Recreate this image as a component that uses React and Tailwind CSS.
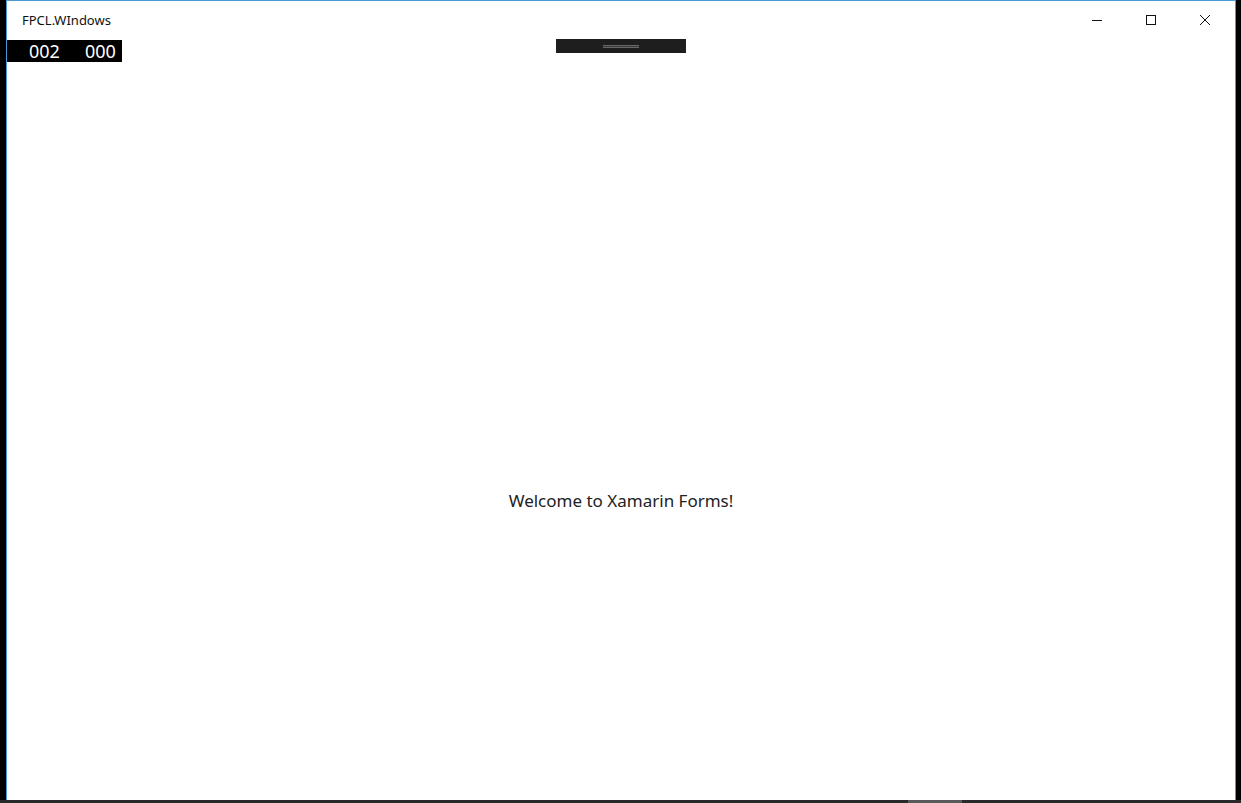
import React from 'react';

const font = { fontFamily: '"Noto Sans", "Open Sans", sans-serif' };

const WindowControls = () => (
  <div className="flex h-[37px] items-center">
    <button className="flex h-[37px] w-[54px] items-center justify-center">
      <svg width="12" height="12" viewBox="0 0 12 12">
        <path d="M1 6.5h10" stroke="#111" strokeWidth="1" />
      </svg>
    </button>
    <button className="flex h-[37px] w-[54px] items-center justify-center">
      <svg width="12" height="12" viewBox="0 0 12 12">
        <rect x="1.5" y="1.5" width="9" height="9" fill="none" stroke="#111" strokeWidth="1" />
      </svg>
    </button>
    <button className="flex h-[37px] w-[54px] items-center justify-center">
      <svg width="12" height="12" viewBox="0 0 12 12">
        <path d="M1 1l10 10M11 1L1 11" stroke="#111" strokeWidth="1" />
      </svg>
    </button>
  </div>
);

export default function App() {
  return (
    <div className="flex h-[803px] w-[1241px] flex-col bg-black" style={font}>
      <div className="flex h-[800px] w-[1230px] ml-[6px] flex-col border-l border-r border-t border-[#4a9ad8] bg-white">
        {/* title bar */}
        <div className="flex h-[37px] items-center justify-between">
          <span className="pl-[15px] pt-[3px] text-[13px] text-[#111]">FPCL.WIndows</span>
          <div className="pr-[3px]">
            <WindowControls />
          </div>
        </div>

        {/* top strip: counter + drag handle */}
        <div className="relative h-[24px]">
          <div className="absolute left-0 top-[2px] flex h-[22px] w-[115px] items-center bg-black text-[18px] leading-none text-white">
            <span className="pl-[22px]">002</span>
            <span className="pl-[25px]">000</span>
          </div>
          <div className="absolute left-[549px] top-[1px] flex h-[14px] w-[130px] items-center justify-center bg-[#1e1e1e]">
            <div className="h-[3px] w-[36px] border-y border-[#666] bg-[#3a3a3a]" />
          </div>
        </div>

        <div className="flex flex-1 items-start justify-center pt-[426px]">
          <span className="text-[17px] text-[#222]">Welcome to Xamarin Forms!</span>
        </div>
      </div>
      <div className="flex h-[3px] w-full bg-[#2a2a2a]">
        <div className="ml-[908px] h-full w-[54px] bg-[#5a5a5a]" />
      </div>
    </div>
  );
}
